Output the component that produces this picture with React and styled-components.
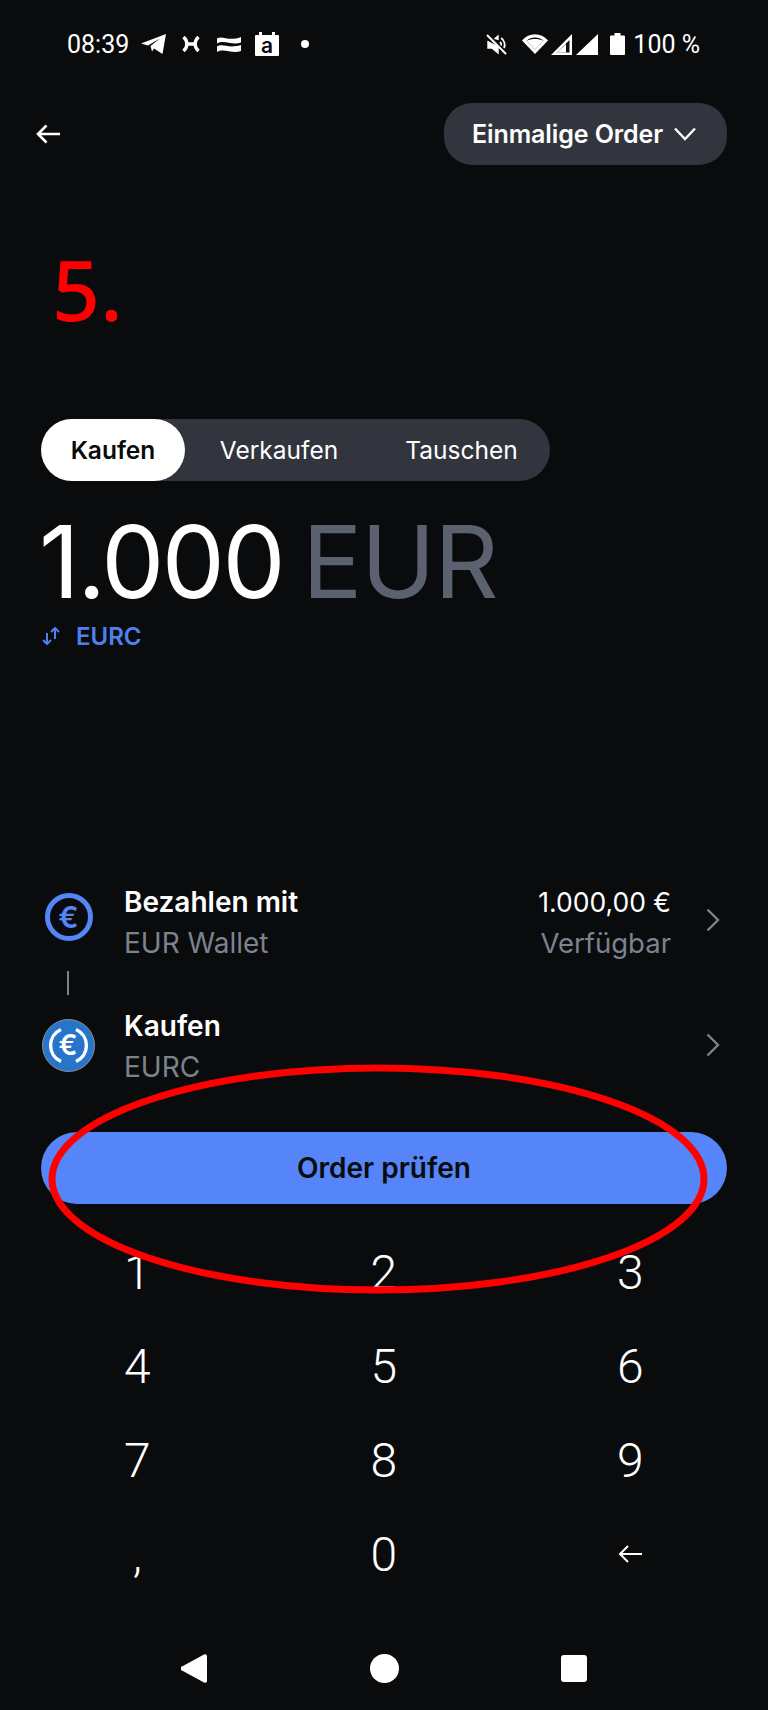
import React from "react";
import styled, { createGlobalStyle } from "styled-components";

const GlobalStyle = createGlobalStyle`
  html, body {
    margin: 0;
    background: #0a0b0d;
  }
`;

const Screen = styled.div`
  position: relative;
  width: 768px;
  height: 1710px;
  overflow: hidden;
  display: flex;
  flex-direction: column;
  background: #0a0b0d;
  color: #fff;
  font-family: Inter, "Liberation Sans", sans-serif;
`;

const StatusBar = styled.div`
  height: 88px;
  padding: 0 68px 0 67px;
  display: flex;
  align-items: center;
  justify-content: space-between;
  box-sizing: border-box;
  font-family: Roboto, sans-serif;
  font-size: 25px;
  color: #fff;
`;

const StatusGroup = styled.div`
  display: flex;
  align-items: center;
`;

const BatteryLabel = styled.span`
  margin-left: 8px;
`;

const Notif = styled.svg`
  display: block;
  flex: none;
  margin-left: ${({ $ml }) => $ml || 0}px;
`;

const Header = styled.div`
  margin-top: 15px;
  height: 62px;
  padding: 0 41px 0 36px;
  display: flex;
  align-items: center;
  justify-content: space-between;
`;

const OrderPill = styled.div`
  width: 283px;
  height: 62px;
  box-sizing: border-box;
  padding-left: 28px;
  border-radius: 28px;
  background: #32353d;
  display: flex;
  align-items: center;
  gap: 11px;
  font-size: 25px;
  font-weight: 600;
  letter-spacing: -0.1px;
`;

const StepLabel = styled.div`
  margin: 75px 0 0 52px;
  height: 97px;
  line-height: 97px;
  font-family: "Noto Sans", sans-serif;
  font-size: 84px;
  font-weight: 500;
  color: #ff0000;
`;

const Segmented = styled.div`
  margin: 82px 0 0 41px;
  width: 509px;
  height: 62px;
  border-radius: 31px;
  background: #32353d;
  display: flex;
  align-items: center;
`;

const Segment = styled.div`
  width: ${({ $w }) => $w}px;
  height: 62px;
  border-radius: 31px;
  display: flex;
  align-items: center;
  justify-content: center;
  font-size: 24.5px;
  font-weight: ${({ $active }) => ($active ? 600 : 400)};
  background: ${({ $active }) => ($active ? "#fff" : "transparent")};
  color: ${({ $active }) => ($active ? "#0a0b0d" : "#fff")};
`;

const Amount = styled.div`
  margin: 31px 0 0 39px;
  height: 100px;
  line-height: 100px;
  display: flex;
  gap: 19px;
  font-size: 100px;
  font-weight: 400;
  letter-spacing: -2.4px;
  white-space: nowrap;
`;

const Currency = styled.span`
  color: #5b616e;
  letter-spacing: -1.2px;
`;

const Convert = styled.div`
  margin: 10px 0 0 42px;
  height: 28px;
  display: flex;
  align-items: center;
  gap: 16px;
  font-size: 24px;
  font-weight: 600;
  color: #4f80f0;
`;

const Funding = styled.div`
  margin-top: 236px;
  padding: 0 48px 0 42px;
  display: flex;
  flex-direction: column;
`;

const FundRow = styled.div`
  height: ${({ $h }) => $h}px;
  display: flex;
  align-items: flex-start;
`;

const CoinSlot = styled.div`
  width: 53px;
  margin-top: ${({ $top }) => $top}px;
  display: flex;
  justify-content: center;
  flex: none;
`;

const FundText = styled.div`
  margin-left: 29px;
  flex: 1;
  display: flex;
  flex-direction: column;
  gap: 9px;
`;

const FundLine = styled.div`
  display: flex;
  justify-content: space-between;
  height: 32px;
  line-height: 32px;
  font-size: 28px;
  font-weight: ${({ $strong }) => ($strong ? 600 : 400)};
  color: ${({ $muted }) => ($muted ? "#7c828e" : "#fff")};
`;

const FundValue = styled.span`
  font-weight: 400;
  margin-right: 35px;
  font-size: ${({ $size }) => $size}px;
`;

const FundChevron = styled.svg`
  display: block;
  flex: none;
  margin-top: ${({ $top }) => $top}px;
`;

const Connector = styled.div`
  width: 2px;
  height: 24px;
  margin: 0 0 15px 25px;
  background: #7c828e;
`;

const ReviewButton = styled.div`
  margin: 13px 41px 0;
  height: 72px;
  border-radius: 36px;
  background: #5585f8;
  color: #0a0b0d;
  display: flex;
  align-items: center;
  justify-content: center;
  font-size: 28px;
  font-weight: 600;
`;

const Keypad = styled.div`
  margin: 21px 0 0 14px;
  display: grid;
  grid-template-columns: repeat(3, 246.5px);
  grid-auto-rows: 94px;
`;

const Key = styled.div`
  display: flex;
  align-items: center;
  justify-content: center;
  font-family: Roboto, sans-serif;
  font-size: 48px;
  font-weight: 350;
  color: #fff;
`;

const NavBar = styled.div`
  margin-top: 53px;
  padding: 0 181px;
  display: flex;
  align-items: center;
  justify-content: space-between;
`;

const NavCircle = styled.div`
  width: 29px;
  height: 29px;
  border-radius: 50%;
  background: #fff;
`;

const NavSquare = styled.div`
  width: 26px;
  height: 27px;
  border-radius: 3px;
  background: #fff;
`;

const Annotation = styled.svg`
  position: absolute;
  left: 46px;
  top: 1062px;
  pointer-events: none;
`;

const CoinText = styled.text`
  font-family: Inter, sans-serif;
  font-weight: 600;
  text-anchor: middle;
`;

const Chevron = ({ top }) => (
  <FundChevron $top={top} width="14" height="24" viewBox="0 0 14 24" fill="none" stroke="#7c828e" strokeWidth="2.4">
    <path d="M1.5 1.5 12 12 1.5 22.5" />
  </FundChevron>
);

const EurCoin = () => (
  <svg width="48" height="48" viewBox="0 0 48 48">
    <circle cx="24" cy="24" r="21.5" fill="none" stroke="#5585f8" strokeWidth="5" />
    <CoinText x="23.5" y="34.5" fontSize="30" fill="#5585f8">€</CoinText>
  </svg>
);

const EurcCoin = () => (
  <svg width="53" height="53" viewBox="0 0 53 53">
    <circle cx="26.5" cy="26.5" r="26" fill="#2775ca" stroke="#8a8f98" strokeWidth="1" />
    <path d="M19 10.5a17.5 17.5 0 0 0 0 32M34 10.5a17.5 17.5 0 0 1 0 32" fill="none" stroke="#fff" strokeWidth="3.4" />
    <CoinText x="26" y="36" fontSize="28" fill="#fff">€</CoinText>
  </svg>
);

const App = () => {
  return (
    <Screen>
      <GlobalStyle />
      <StatusBar>
        <StatusGroup>
          <span>08:39</span>
          <Notif $ml={12} width="25" height="20" viewBox="0 0 25 20" fill="#fff">
            <path d="M0 9.5 25 0 21.5 20 13 14.5 11 17.5 9.5 12 19 4.5 7 11.5Z" />
          </Notif>
          <Notif $ml={16} width="18" height="16" viewBox="0 0 18 16" fill="none" stroke="#fff" strokeWidth="3.4">
            <path d="M1.5 1C6 5 6 11 1.5 15M16.5 1C12 5 12 11 16.5 15M5 8h8" />
          </Notif>
          <Notif $ml={17} width="24" height="17" viewBox="0 0 24 17" fill="#fff">
            <path d="M0 2.5C6 -1 11 6 24 1v5.5C15 10 7 3 0 7.5ZM0 10.5C6 7 11 13 24 9v6C15 18.5 7 11.5 0 16Z" />
          </Notif>
          <Notif $ml={14} width="24" height="24" viewBox="0 0 24 24">
            <path d="M4 0h3v3h10V0h3v3h3a1 1 0 0 1 1 1v19a1 1 0 0 1-1 1H1a1 1 0 0 1-1-1V4a1 1 0 0 1 1-1h3Z" fill="#fff" />
            <CoinText x="12" y="20.5" fontSize="21" fill="#0a0b0d">a</CoinText>
          </Notif>
          <Notif $ml={22} width="8" height="8" viewBox="0 0 8 8" fill="#fff">
            <circle cx="4" cy="4" r="4" />
          </Notif>
        </StatusGroup>
        <StatusGroup>
          <Notif width="21" height="21" viewBox="0 0 21 21" fill="none" stroke="#fff" strokeWidth="2">
            <path d="M1 1 20 20" />
            <path d="M2 7v7h4l6 5v-7M12 6V2L8.5 5" fill="#fff" strokeWidth="1.4" />
            <path d="M15 4c3.5 2 4.6 7 3 10M14 8c1.3 1 1.6 2.4 1.3 3.6" strokeWidth="1.8" />
          </Notif>
          <Notif $ml={15} width="26" height="20" viewBox="0 0 26 20" fill="#fff">
            <path d="M13 20 0 6.5C7-2 19-2 26 6.5ZM13 15.5 21.5 6.8C16.500 2.500 9.500 2.500 4.500 6.800Z" fillRule="evenodd" />
            <path d="M13 15.500 21.500 6.800C16.500 4.500 9.500 4.500 4.500 6.800Z" />
          </Notif>
          <Notif $ml={3} width="21" height="21" viewBox="0 0 21 21" fill="#fff">
            <path d="M21 0v21H0ZM18.500 6 6 18.500h12.500Z" fillRule="evenodd" />
            <path d="M15 10v8.500H6Z" />
          </Notif>
          <Notif $ml={4} width="22" height="21" viewBox="0 0 22 21" fill="#fff">
            <path d="M22 0v21H0Z" />
          </Notif>
          <Notif $ml={12} width="15" height="22" viewBox="0 0 15 22" fill="#fff">
            <path d="M4.500 0h6v2.500H14a1 1 0 0 1 1 1V21a1 1 0 0 1-1 1H1a1 1 0 0 1-1-1V3.500a1 1 0 0 1 1-1h3.500Z" />
          </Notif>
          <BatteryLabel>100 %</BatteryLabel>
        </StatusGroup>
      </StatusBar>

      <Header>
        <svg width="24" height="20" viewBox="0 0 24 20" fill="none" stroke="#fff" strokeWidth="2.6">
          <path d="M24 10H2M10.500 1.500 2 10l8.500 8.500" />
        </svg>
        <OrderPill>
          Einmalige Order
          <svg width="22" height="14" viewBox="0 0 22 14" fill="none" stroke="#fff" strokeWidth="2.4">
            <path d="M1 1.500 11 12 21 1.500" />
          </svg>
        </OrderPill>
      </Header>

      <StepLabel>5.</StepLabel>

      <Segmented>
        <Segment $active $w={144}>Kaufen</Segment>
        <Segment $w={188}>Verkaufen</Segment>
        <Segment $w={177}>Tauschen</Segment>
      </Segmented>

      <Amount>
        <span>1.000</span>
        <Currency>EUR</Currency>
      </Amount>

      <Convert>
        <svg width="18" height="18" viewBox="0 0 18 18" fill="none" stroke="#4f80f0" strokeWidth="2">
          <path d="M5 6v11M1 13l4 4 4-4M13 12V1M9 5l4-4 4 4" />
        </svg>
        EURC
      </Convert>

      <Funding>
        <FundRow $h={85}>
          <CoinSlot $top={7}><EurCoin /></CoinSlot>
          <FundText>
            <FundLine $strong>
              Bezahlen mit
              <FundValue $size={26.5}>1.000,00 €</FundValue>
            </FundLine>
            <FundLine $muted>
              EUR Wallet
              <FundValue $size={27.5}>Verfügbar</FundValue>
            </FundLine>
          </FundText>
          <Chevron top={22} />
        </FundRow>
        <Connector />
        <FundRow $h={109}>
          <CoinSlot $top={9}><EurcCoin /></CoinSlot>
          <FundText>
            <FundLine $strong>Kaufen</FundLine>
            <FundLine $muted>EURC</FundLine>
          </FundText>
          <Chevron top={23} />
        </FundRow>
      </Funding>

      <ReviewButton>Order prüfen</ReviewButton>

      <Keypad>
        {["1", "2", "3", "4", "5", "6", "7", "8", "9", ","].map((k) => (
          <Key key={k}>{k}</Key>
        ))}
        <Key>0</Key>
        <Key>
          <svg width="24" height="20" viewBox="0 0 24 20" fill="none" stroke="#fff" strokeWidth="2">
            <path d="M24 10H2M10 2 2 10l8 8" />
          </svg>
        </Key>
      </Keypad>

      <NavBar>
        <svg width="26" height="29" viewBox="0 0 26 29" fill="#fff">
          <path d="M23 .5 1 12.500a2 2 0 0 0 0 4L23 28.500a2 2 0 0 0 3-1.500V2a2 2 0 0 0-3-1.500Z" />
        </svg>
        <NavCircle />
        <NavSquare />
      </NavBar>

      <Annotation width="664" height="234" viewBox="0 0 664 234" fill="none" stroke="#ff0000" strokeWidth="7">
        <ellipse cx="332" cy="117" rx="326" ry="111" />
      </Annotation>
    </Screen>
  );
};

export default App;
